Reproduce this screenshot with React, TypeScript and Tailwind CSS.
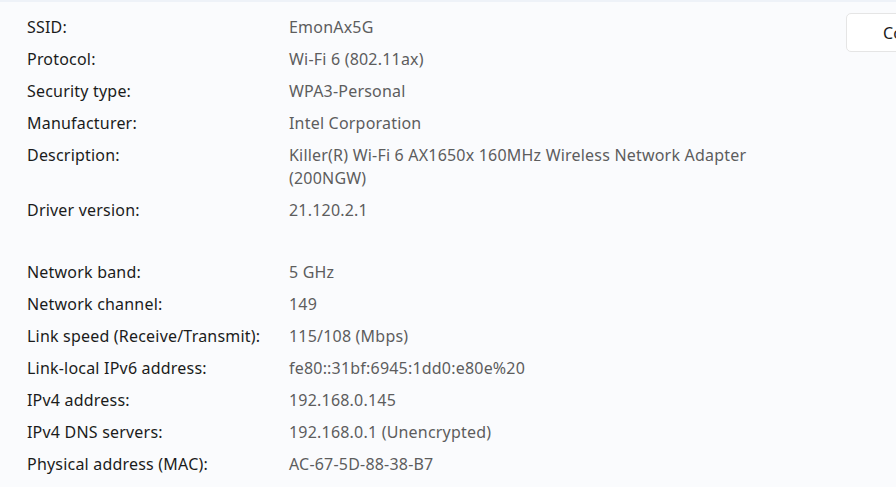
export default function App() {
  const group1: [string, string[]][] = [
    ["SSID:", ["EmonAx5G"]],
    ["Protocol:", ["Wi-Fi 6 (802.11ax)"]],
    ["Security type:", ["WPA3-Personal"]],
    ["Manufacturer:", ["Intel Corporation"]],
    ["Description:", ["Killer(R) Wi-Fi 6 AX1650x 160MHz Wireless Network Adapter", "(200NGW)"]],
    ["Driver version:", ["21.120.2.1"]],
  ];
  const group2: [string, string[]][] = [
    ["Network band:", ["5 GHz"]],
    ["Network channel:", ["149"]],
    ["Link speed (Receive/Transmit):", ["115/108 (Mbps)"]],
    ["Link-local IPv6 address:", ["fe80::31bf:6945:1dd0:e80e%20"]],
    ["IPv4 address:", ["192.168.0.145"]],
    ["IPv4 DNS servers:", ["192.168.0.1 (Unencrypted)"]],
    ["Physical address (MAC):", ["AC-67-5D-88-38-B7"]],
  ];
  const Row = ({ label, value }: { label: string; value: string[] }) => (
    <div className="flex py-[4.5px] leading-[23px]">
      <div className="w-[262px] shrink-0 text-[#1b1b1b]">{label}</div>
      <div className="w-[480px] text-[#5d5d5d]">
        {value.map((v, i) => (
          <div key={i}>{v}</div>
        ))}
      </div>
    </div>
  );
  return (
    <div
      className="w-[896px] h-[487px] overflow-hidden bg-[#fafbfd] border-t-2 border-[#eef2f8] text-[16px] tracking-[0.2px] relative"
      style={{ fontFamily: '"Noto Sans", sans-serif' }}
    >
      <div className="flex">
        <div className="pl-[27px] pt-[9px]">
          {group1.map(([l, v]) => (
            <Row key={l} label={l} value={v} />
          ))}
          <div className="h-[30px]" />
          {group2.map(([l, v]) => (
            <Row key={l} label={l} value={v} />
          ))}
        </div>
        <div className="ml-auto pt-[11px]">
          <button className="h-[39px] w-[120px] -mr-[70px] rounded-[5px] border border-[#e5e5e5] bg-white pl-[36px] text-left text-[#1b1b1b]">
            Copy
          </button>
        </div>
      </div>
    </div>
  );
}
